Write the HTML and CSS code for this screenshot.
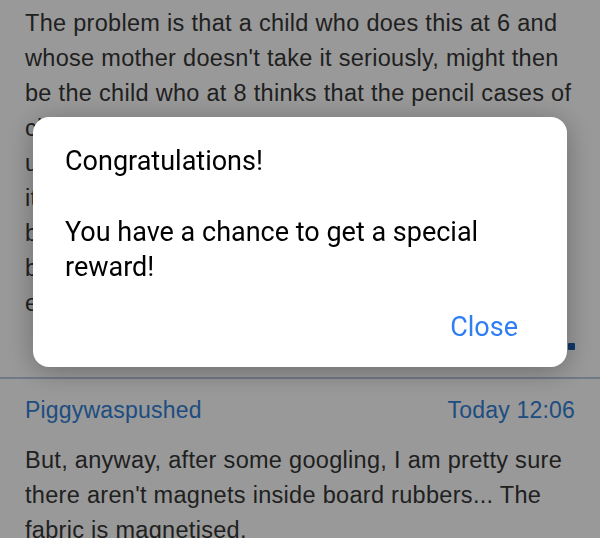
FILE: index.html
```html
<!DOCTYPE html>
<html lang="en">
<head>
<meta charset="utf-8">
<title>Thread</title>
<link rel="stylesheet" href="styles.css">
</head>
<body>
<div class="thread">
  <article class="post">
    <p class="post-body">The problem is that a child who does this at 6 and<br>whose mother doesn't take it seriously, might then<br>be the child who at 8 thinks that the pencil cases of<br>classmates are fair game, and who at 12 is<br>unbothered by taking things from shops because<br>it is all just a bit of fun that nobody notices,<br>builds up both a reputation and a habit that is<br>both hard to break and follows them into their<br>eventual adult life as well.</p>
    <div class="post-more"><span class="more-dot"></span></div>
  </article>
  <article class="post post-next">
    <header class="post-head">
      <span class="post-author">Piggywaspushed</span>
      <span class="post-time">Today 12:06</span>
    </header>
    <p class="post-body">But, anyway, after some googling, I am pretty sure there aren't magnets inside board rubbers... The fabric is magnetised.</p>
  </article>
</div>
<div class="overlay">
  <div class="dialog" role="alertdialog">
    <p class="dialog-text">Congratulations!</p>
    <p class="dialog-text dialog-msg">You have a chance to get a special reward!</p>
    <div class="dialog-actions"><button class="dialog-btn">Close</button></div>
  </div>
</div>
</body>
</html>
```

FILE: styles.css
```css
html, body {
  margin: 0;
  padding: 0;
  background: #ffffff;
  overflow: hidden;
}
body {
  width: 600px;
  height: 538px;
  font-family: "Liberation Sans", Arial, sans-serif;
  color: #363636;
}
.thread {
  display: flex;
  flex-direction: column;
}
.post {
  padding: 6px 25px 0 25px;
}
.post-body {
  margin: 0;
  font-size: 23.5px;
  line-height: 35px;
  letter-spacing: 0.3px;
}
.post-more {
  display: flex;
  justify-content: flex-end;
  align-items: flex-start;
  height: 56px;
}
.more-dot {
  width: 7px;
  height: 7px;
  background: #1d5fae;
  border-radius: 1px;
  margin-top: 22px;
}
.post-next {
  border-top: 2px solid #bccbe2;
  padding-top: 14px;
}
.post-head {
  display: flex;
  justify-content: space-between;
  font-size: 23px;
  line-height: 35px;
  letter-spacing: 0.2px;
  color: #3380d6;
  margin-bottom: 15px;
}
.overlay {
  position: fixed;
  inset: 0;
  background: rgba(0, 0, 0, 0.4);
}
.dialog {
  position: absolute;
  left: 33px;
  top: 117px;
  width: 534px;
  height: 250px;
  box-sizing: border-box;
  background: #ffffff;
  border-radius: 16px;
  box-shadow: 0 4px 28px rgba(0, 0, 0, 0.3);
  padding: 27px 32px 0 32px;
  font-family: Roboto, "Liberation Sans", sans-serif;
  color: #000000;
  display: flex;
  flex-direction: column;
}
.dialog-text {
  margin: 0;
  font-size: 27px;
  line-height: 35px;
}
.dialog-msg {
  margin-top: 36px;
}
.dialog-actions {
  display: flex;
  justify-content: flex-end;
  margin-top: 26px;
}
.dialog-btn {
  border: 0;
  background: none;
  padding: 0;
  margin-right: 17px;
  font-family: Roboto, "Liberation Sans", sans-serif;
  font-size: 27px;
  line-height: 32px;
  color: #2f7ef4;
}
```
